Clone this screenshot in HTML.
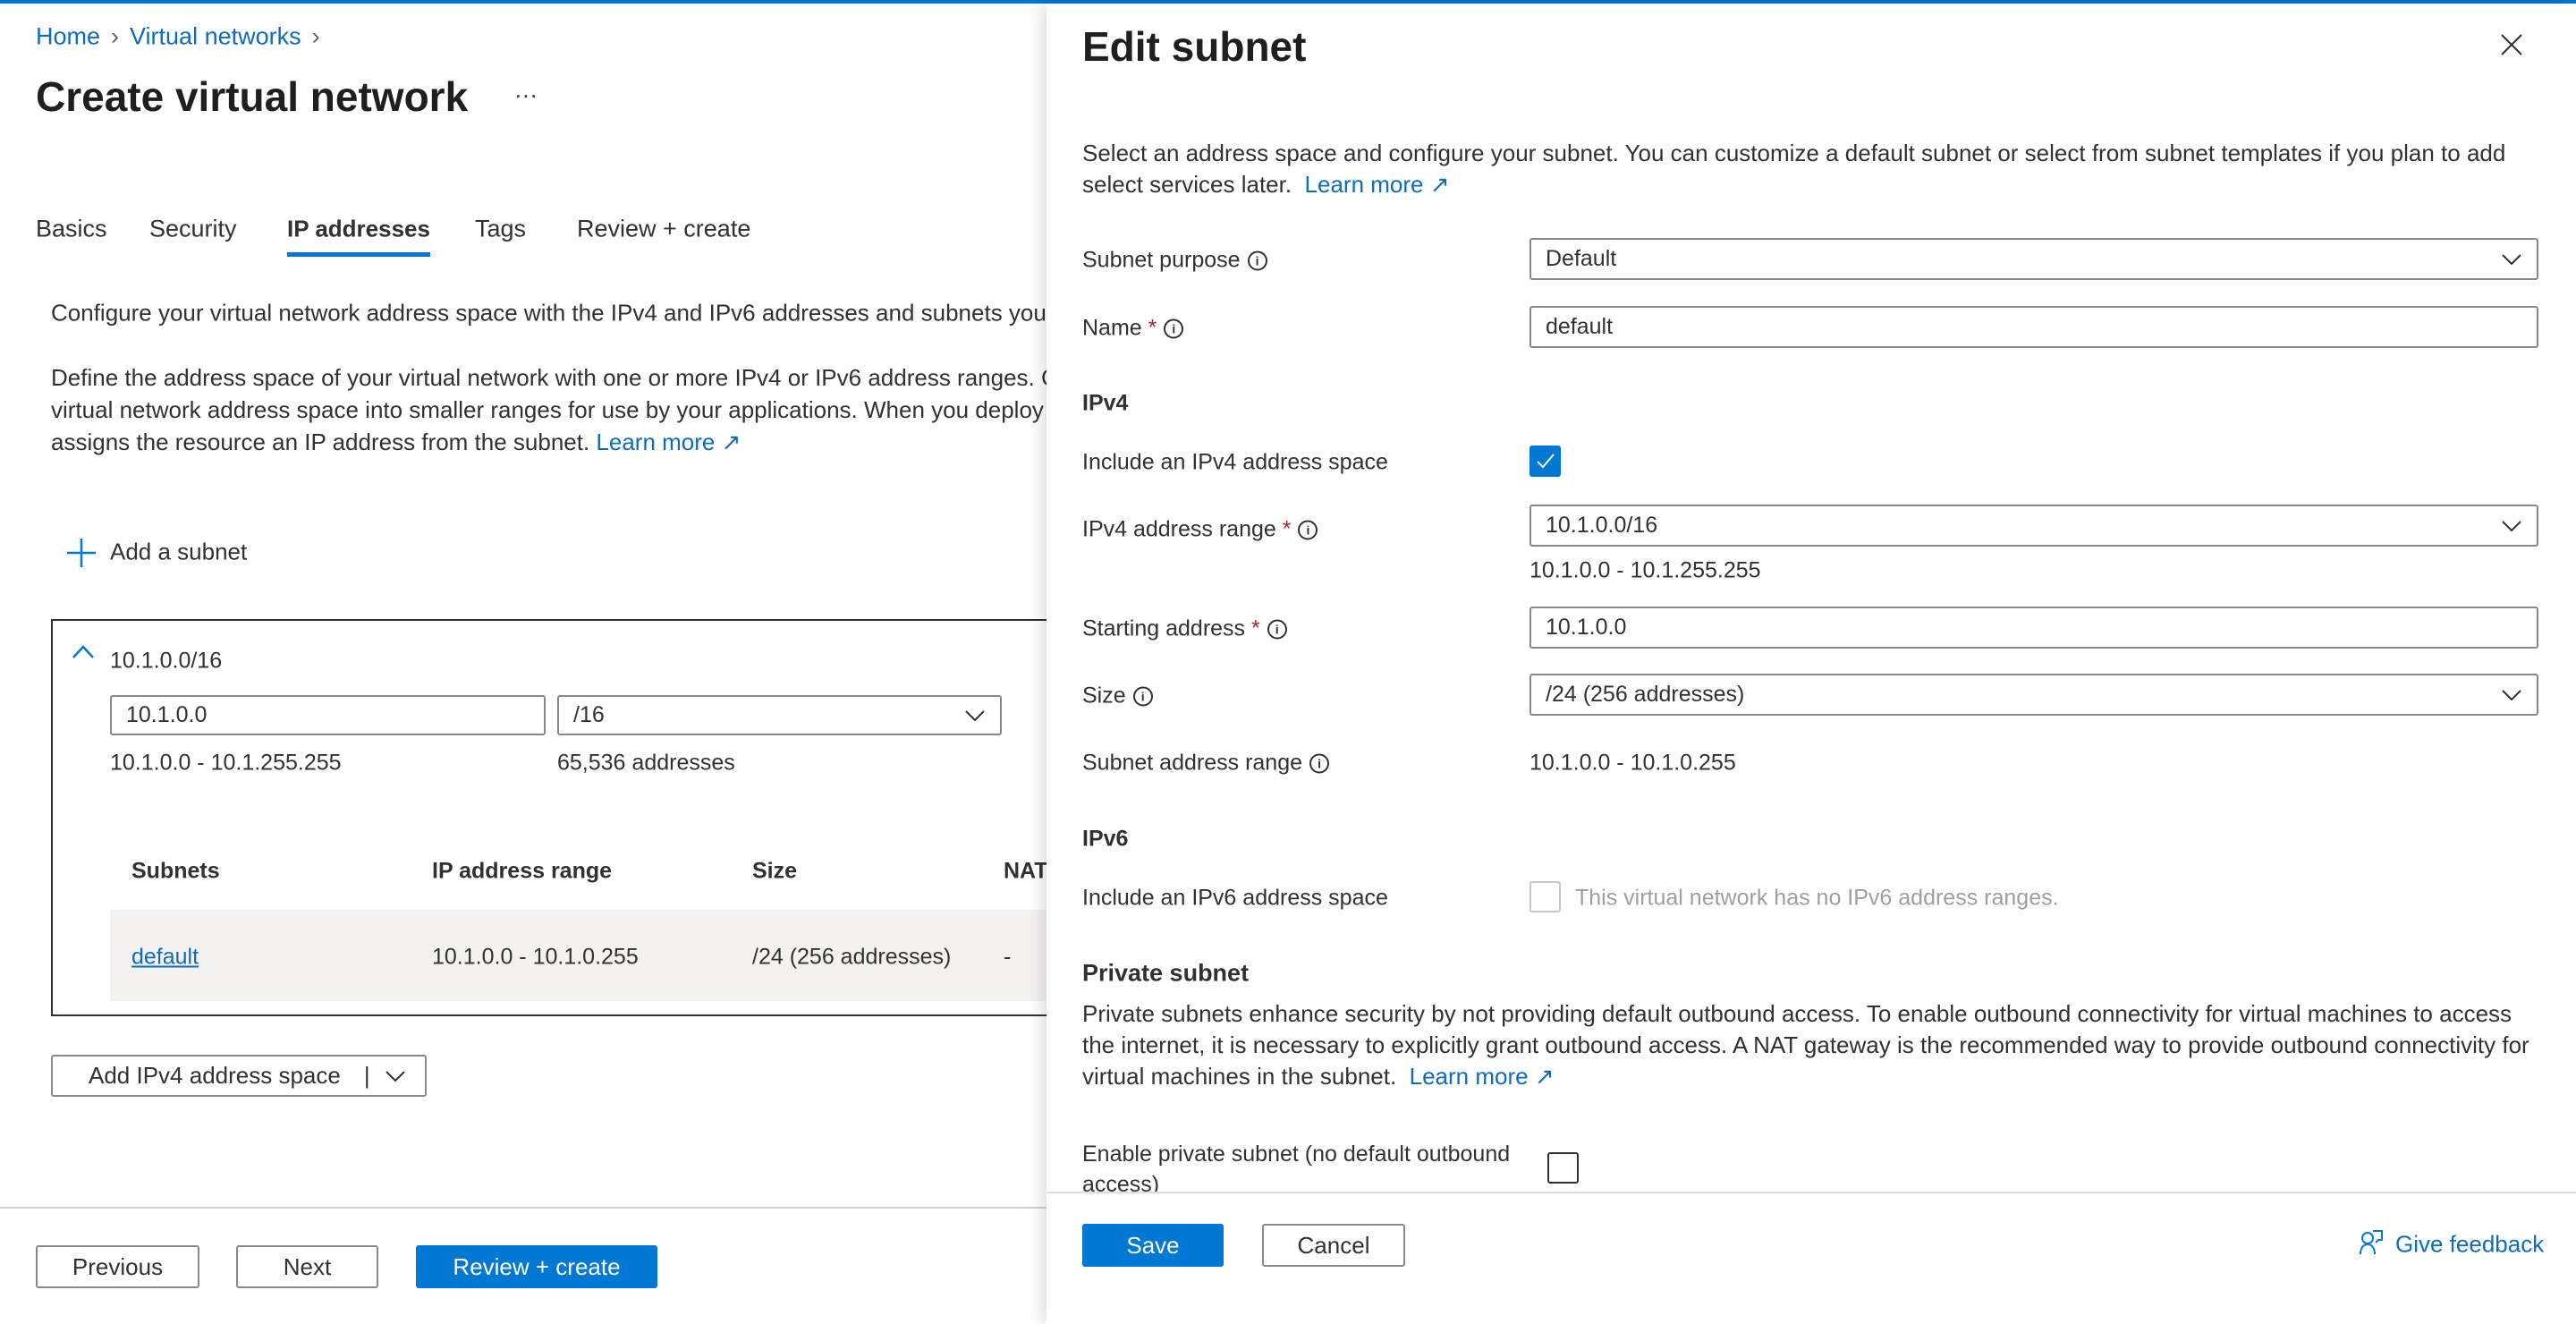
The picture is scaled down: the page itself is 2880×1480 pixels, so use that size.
<!DOCTYPE html>
<html><head><meta charset="utf-8"><style>
*{box-sizing:border-box;margin:0;padding:0}
body{width:2880px;height:1480px;position:relative;overflow:hidden;background:#fff;font-family:"Liberation Sans",sans-serif;color:#323130;font-size:25px}
.a{position:absolute;white-space:nowrap}
.c{transform:translateY(-50%)}
.link{color:#0f6cbd}
.inp{position:absolute;border:2px solid #8a8886;border-radius:3px;background:#fff;padding-left:16px;display:flex;align-items:center;font-size:25px}
.btn{position:absolute;border:2px solid #8a8886;border-radius:3px;background:#fff;display:flex;align-items:center;justify-content:center;font-size:26px;color:#323130}
.pri{background:#0078d4;border-color:#0078d4;color:#fff}
.info{display:inline-block;width:22px;height:22px;border:2px solid #323130;border-radius:50%;font-size:14px;line-height:18px;text-align:center;vertical-align:middle;margin-left:8px;font-weight:bold}
.req{color:#a4262c}
.b{font-weight:bold}
</style></head><body>
<div class="a" style="left:0;top:0;width:2880px;height:4px;background:#0078d4"></div>

<div class="a c" style="left:40px;top:41px;font-size:27px"><span class="link">Home</span><span style="color:#605e5c;margin:0 12px">›</span><span class="link">Virtual networks</span><span style="color:#605e5c;margin:0 12px">›</span></div>
<div class="a c b" style="left:40px;top:108px;font-size:46px;color:#201f1e">Create virtual network</div>
<div class="a c" style="left:575px;top:106px;font-size:26px">···</div>

<div class="a c" style="left:40px;top:256px;font-size:27px">Basics</div>
<div class="a c" style="left:167px;top:256px;font-size:27px">Security</div>
<div class="a c" style="left:321px;top:256px;font-size:26px;font-weight:bold">IP addresses</div>
<div class="a" style="left:321px;top:282px;width:160px;height:5px;background:#0078d4"></div>
<div class="a c" style="left:531px;top:256px;font-size:27px">Tags</div>
<div class="a c" style="left:645px;top:256px;font-size:27px">Review + create</div>

<div class="a c" style="left:57px;top:350px;font-size:26px">Configure your virtual network address space with the IPv4 and IPv6 addresses and subnets you need.</div>
<div class="a" style="left:57px;top:404px;line-height:36px;font-size:26px">Define the address space of your virtual network with one or more IPv4 or IPv6 address ranges. Create subnets to segment the<br>virtual network address space into smaller ranges for use by your applications. When you deploy resources into a subnet, Azure<br>assigns the resource an IP address from the subnet. <span class="link">Learn more ↗</span></div>

<svg class="a" style="left:73px;top:600px" width="36" height="36"><path d="M18 2V34M2 18H34" stroke="#0078d4" stroke-width="2.5"/></svg>
<div class="a c" style="left:123px;top:617px;font-size:26px">Add a subnet</div>

<div class="a" style="left:57px;top:692px;width:1200px;height:444px;border:2px solid #323130"></div>
<svg class="a" style="left:80px;top:720px" width="26" height="18"><path d="M2 15L13 3L24 15" stroke="#0078d4" stroke-width="2.5" fill="none"/></svg>
<div class="a c" style="left:123px;top:739px">10.1.0.0/16</div>
<div class="inp" style="left:123px;top:777px;width:487px;height:45px">10.1.0.0</div>
<div class="inp" style="left:623px;top:777px;width:497px;height:45px">/16<svg style="position:absolute;right:16px;top:14px" width="24" height="14"><path d="M2 2L12 12L22 2" stroke="#323130" stroke-width="2" fill="none"/></svg></div>
<div class="a c" style="left:123px;top:853px">10.1.0.0 - 10.1.255.255</div>
<div class="a c" style="left:623px;top:853px">65,536 addresses</div>
<div class="a c b" style="left:147px;top:974px">Subnets</div>
<div class="a c b" style="left:483px;top:974px">IP address range</div>
<div class="a c b" style="left:841px;top:974px">Size</div>
<div class="a c b" style="left:1122px;top:974px">NAT</div>
<div class="a" style="left:123px;top:1017px;width:1100px;height:102px;background:#f3f2f1"></div>
<div class="a c link" style="left:147px;top:1070px;text-decoration:underline">default</div>
<div class="a c" style="left:483px;top:1070px">10.1.0.0 - 10.1.0.255</div>
<div class="a c" style="left:841px;top:1070px">/24 (256 addresses)</div>
<div class="a c" style="left:1122px;top:1070px">-</div>

<div class="btn" style="left:57px;top:1179px;width:420px;height:47px;justify-content:flex-start;padding-left:40px">Add IPv4 address space<span style="margin-left:26px">|</span><svg style="margin-left:16px" width="24" height="14"><path d="M2 2L12 12L22 2" stroke="#323130" stroke-width="2" fill="none"/></svg></div>

<div class="a" style="left:0;top:1349px;width:1170px;height:2px;background:#d2d0ce"></div>
<div class="btn" style="left:40px;top:1392px;width:183px;height:48px">Previous</div>
<div class="btn" style="left:264px;top:1392px;width:159px;height:48px">Next</div>
<div class="btn pri" style="left:465px;top:1392px;width:270px;height:48px">Review + create</div>

<div class="a" style="left:1170px;top:4px;width:1710px;height:1476px;background:#fff;box-shadow:-6px 0 16px rgba(0,0,0,.12)">
<div class="a c b" style="left:40px;top:48px;font-size:46px;color:#201f1e">Edit subnet</div>
<svg class="a" style="left:1626px;top:34px" width="24" height="24"><path d="M1 1L23 23M23 1L1 23" stroke="#323130" stroke-width="2"/></svg>
<div class="a" style="left:40px;top:150px;line-height:35px;font-size:26px">Select an address space and configure your subnet. You can customize a default subnet or select from subnet templates if you plan to add<br>select services later. &nbsp;<span class="link">Learn more ↗</span></div>

<div class="a c" style="left:40px;top:287px">Subnet purpose<span class="info">i</span></div>
<div class="inp" style="left:540px;top:262px;width:1128px;height:47px">Default<svg style="position:absolute;right:16px;top:15px" width="24" height="14"><path d="M2 2L12 12L22 2" stroke="#323130" stroke-width="2" fill="none"/></svg></div>
<div class="a c" style="left:40px;top:363px">Name <span class="req">*</span><span class="info">i</span></div>
<div class="inp" style="left:540px;top:338px;width:1128px;height:47px">default</div>

<div class="a c b" style="left:40px;top:447px">IPv4</div>
<div class="a c" style="left:40px;top:513px">Include an IPv4 address space</div>
<div class="a" style="left:540px;top:494px;width:35px;height:35px;background:#0078d4;border-radius:3px"><svg width="35" height="35"><path d="M9 18L15 24L27 10" stroke="#fff" stroke-width="2" fill="none"/></svg></div>

<div class="a c" style="left:40px;top:588px">IPv4 address range <span class="req">*</span><span class="info">i</span></div>
<div class="inp" style="left:540px;top:560px;width:1128px;height:47px">10.1.0.0/16<svg style="position:absolute;right:16px;top:15px" width="24" height="14"><path d="M2 2L12 12L22 2" stroke="#323130" stroke-width="2" fill="none"/></svg></div>
<div class="a c" style="left:540px;top:634px">10.1.0.0 - 10.1.255.255</div>

<div class="a c" style="left:40px;top:699px">Starting address <span class="req">*</span><span class="info">i</span></div>
<div class="inp" style="left:540px;top:674px;width:1128px;height:47px">10.1.0.0</div>
<div class="a c" style="left:40px;top:774px">Size<span class="info">i</span></div>
<div class="inp" style="left:540px;top:749px;width:1128px;height:47px">/24 (256 addresses)<svg style="position:absolute;right:16px;top:15px" width="24" height="14"><path d="M2 2L12 12L22 2" stroke="#323130" stroke-width="2" fill="none"/></svg></div>
<div class="a c" style="left:40px;top:849px">Subnet address range<span class="info">i</span></div>
<div class="a c" style="left:540px;top:849px">10.1.0.0 - 10.1.0.255</div>

<div class="a c b" style="left:40px;top:934px">IPv6</div>
<div class="a c" style="left:40px;top:1000px">Include an IPv6 address space</div>
<div class="a" style="left:540px;top:981px;width:35px;height:35px;border:2px solid #c8c6c4;border-radius:3px"></div>
<div class="a c" style="left:591px;top:1000px;color:#a19f9d">This virtual network has no IPv6 address ranges.</div>

<div class="a c b" style="left:40px;top:1084px;font-size:27px">Private subnet</div>
<div class="a" style="left:40px;top:1112px;line-height:35px;font-size:26px">Private subnets enhance security by not providing default outbound access. To enable outbound connectivity for virtual machines to access<br>the internet, it is necessary to explicitly grant outbound access. A NAT gateway is the recommended way to provide outbound connectivity for<br>virtual machines in the subnet. &nbsp;<span class="link">Learn more ↗</span></div>

<div class="a" style="left:0;top:1260px;width:1710px;height:68px;overflow:hidden">
<div class="a" style="left:40px;top:9px;line-height:34px">Enable private subnet (no default outbound<br>access)</div>
<div class="a" style="left:560px;top:24px;width:35px;height:35px;border:2px solid #323130;border-radius:3px"></div>
</div>
<div class="a" style="left:0;top:1328px;width:1710px;height:2px;background:#e1dfdd"></div>
<div class="btn pri" style="left:40px;top:1364px;width:158px;height:48px">Save</div>
<div class="btn" style="left:241px;top:1364px;width:160px;height:48px">Cancel</div>
<svg class="a" style="left:1467px;top:1370px" width="28" height="30"><circle cx="10" cy="10" r="6" stroke="#0078d4" stroke-width="2" fill="none"/><path d="M2 28C2 20 6 17 10 17C14 17 18 20 18 28M16 2H26V12H22L19 15" stroke="#0078d4" stroke-width="2" fill="none"/></svg>
<div class="a c link" style="left:1508px;top:1387px;font-size:26px">Give feedback</div>
</div>
</body></html>
